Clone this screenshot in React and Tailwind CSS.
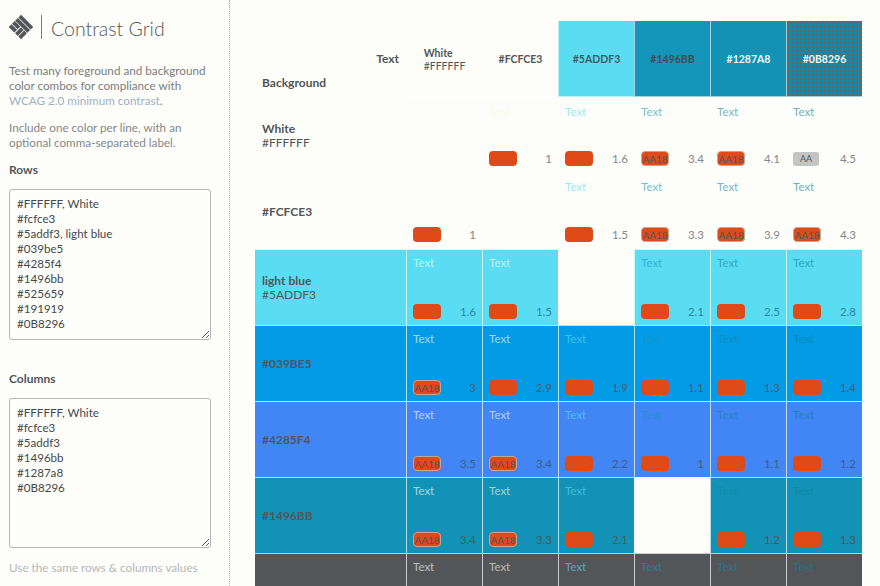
const columns = [
  { hex: "#FFFFFF", label: "White", text: "text-[#ffffff]", bg: "" },
  { hex: "#FCFCE3", text: "text-[#fcfce3]", bg: "" },
  { hex: "#5ADDF3", text: "text-[#5addf3]", bg: "bg-[#5addf3]", head: "text-[#3f5a66]" },
  { hex: "#1496BB", text: "text-[#1496bb]", bg: "bg-[#1496bb]", head: "text-[#3f4c55]" },
  { hex: "#1287A8", text: "text-[#1287a8]", bg: "bg-[#1492b4]", head: "text-[#f2f5f3]" },
  {
    hex: "#0B8296",
    text: "text-[#0b8296]",
    bg: "bg-[#1488a6] bg-[radial-gradient(circle,#7d5c5c_1px,transparent_1px)] bg-[length:4px_4px]",
    head: "text-[#f2f5f3]",
  },
];

// each cell: [ratio, badge] - null where row colour == column colour
const rows = [
  { hex: "#FFFFFF", label: "White", bg: "", num: "text-[#85888a]", pad: "pt-[6px] pb-[7px]",
    cells: [null, ["1", "fail"], ["1.6", "fail"], ["3.4", "AA18"], ["4.1", "AA18"], ["4.5", "AA"]] },
  { hex: "#FCFCE3", bg: "", num: "text-[#85888a]", pad: "pt-[5px] pb-[7px]",
    cells: [["1", "fail"], null, ["1.5", "fail"], ["3.3", "AA18"], ["3.9", "AA18"], ["4.3", "AA18"]] },
  { hex: "#5ADDF3", label: "light blue", bg: "bg-[#5addf3]", num: "text-[#2a86a6]", pad: "pt-[5px] pb-[6px]",
    cells: [["1.6", "fail"], ["1.5", "fail"], null, ["2.1", "fail"], ["2.5", "fail"], ["2.8", "fail"]] },
  { hex: "#039BE5", bg: "bg-[#039be5]", num: "text-[#47606e]", pad: "pt-[5px] pb-[6px]",
    cells: [["3", "AA18"], ["2.9", "fail"], ["1.9", "fail"], ["1.1", "fail"], ["1.3", "fail"], ["1.4", "fail"]] },
  { hex: "#4285F4", bg: "bg-[#4285f4]", num: "text-[#3f5f80]", pad: "pt-[5px] pb-[6px]",
    cells: [["3.5", "AA18"], ["3.4", "AA18"], ["2.2", "fail"], ["1", "fail"], ["1.1", "fail"], ["1.2", "fail"]] },
  { hex: "#1496BB", bg: "bg-[#1292b6]", num: "text-[#4d5a60]", pad: "pt-[5px] pb-[6px]",
    cells: [["3.4", "AA18"], ["3.3", "AA18"], ["2.1", "fail"], null, ["1.2", "fail"], ["1.3", "fail"]] },
];

function Logo() {
  return (
    <svg width="24" height="24" viewBox="0 0 24 24" className="shrink-0">
      <g fill="#525659" transform="rotate(-45 12 12)">
        <rect x="3.4" y="3.4" width="3.8" height="7.8" />
        <rect x="8" y="3.4" width="3.8" height="7.8" />
        <rect x="12.4" y="3.4" width="3.8" height="17.2" />
        <rect x="16.9" y="3.4" width="3.8" height="17.2" />
        <rect x="3.4" y="12.2" width="8.4" height="3.8" />
        <rect x="3.4" y="16.8" width="8.4" height="3.8" />
      </g>
    </svg>
  );
}

function Badge({ kind }) {
  if (kind === "fail") return <span className="block w-[28px] h-[15px] rounded-[4px] bg-[#e04a19]" />;
  if (kind === "AA")
    return (
      <span className="flex items-center justify-center w-[26px] h-[14px] rounded-[3px] bg-[#c3c5c3] text-[9px] leading-none text-[#525659]">
        AA
      </span>
    );
  return (
    <span className="flex items-center justify-center w-[28px] h-[15px] rounded-[4px] bg-[#e04a19] border border-[#c9a493] text-[10px] leading-none text-[#525659]">
      {kind}
    </span>
  );
}

function Cell({ col, cell, num, pad }) {
  if (!cell) return <div className="border-l border-t border-white/70 h-[76px] bg-[#fdfdf9]" />;
  return (
    <div className={`h-[76px] border-l border-t border-white/70 pl-[6px] pr-[6px] flex flex-col justify-between ${pad}`}>
      <span className={`text-[11.5px] leading-[15px] opacity-60 ${col.text}`}>Text</span>
      <div className="flex items-center justify-between">
        <Badge kind={cell[1]} />
        <span className={`text-[11.5px] leading-[15px] ${num}`}>{cell[0]}</span>
      </div>
    </div>
  );
}

function Field({ label, value, heightClass }) {
  return (
    <div>
      <div className="text-xs font-bold leading-[15px] text-[#525659]">{label}</div>
      <textarea
        readOnly
        defaultValue={value}
        className={`block mt-[12px] w-[202px] ${heightClass} bg-[#fdfdf9] border border-[#b2b6b6] rounded-[3px] px-[7px] py-[6px] text-[11.6px] leading-[15px] text-[#45494c] outline-none`}
      />
    </div>
  );
}

export default function App() {
  return (
    <div className="flex h-[586px] overflow-hidden bg-[#fdfdf9] font-['Lato',sans-serif]">
      <aside className="w-[230px] shrink-0 border-r border-dotted border-[#a9acac] pl-[9px]">
        <div className="flex items-center h-[24px] mt-[15px]">
          <Logo />
          <span className="ml-[8px] w-px h-[24px] bg-[#7a7d7f]" />
          <h1 className="ml-[9px] mt-[3px] text-[19.5px] font-light leading-none text-[#525659]">Contrast Grid</h1>
        </div>
        <p className="mt-[24px] w-[205px] text-[11.7px] leading-[15px] text-[#7a7d7f]">
          Test many foreground and background color combos for compliance with{" "}
          <a className="text-[#9db1c0]">WCAG 2.0 minimum contrast</a>.
        </p>
        <p className="mt-[12px] w-[205px] text-[11.7px] leading-[15px] text-[#85888a]">
          Include one color per line, with an optional comma-separated label.
        </p>
        <div className="mt-[12px]">
          <Field
            label="Rows"
            heightClass="h-[151px]"
            value={"#FFFFFF, White\n#fcfce3\n#5addf3, light blue\n#039be5\n#4285f4\n#1496bb\n#525659\n#191919\n#0B8296"}
          />
        </div>
        <div className="mt-[31px]">
          <Field
            label="Columns"
            heightClass="h-[150px]"
            value={"#FFFFFF, White\n#fcfce3\n#5addf3\n#1496bb\n#1287a8\n#0B8296"}
          />
        </div>
        <p className="mt-[12px] text-[11.7px] leading-[15px] text-[#b4b8b8]">Use the same rows &amp; columns values</p>
      </aside>

      <main className="ml-[25px] pt-[21px] w-[607px] shrink-0">
        <div className="grid grid-cols-[151px_repeat(6,76px)]">
          <div className="h-[76px] relative text-xs font-bold text-[#525659]">
            <span className="absolute right-[7px] top-[30px] leading-[15px]">Text</span>
            <span className="absolute left-[7px] top-[54px] leading-[15px]">Background</span>
          </div>
          {columns.map((col) => (
            <div
              key={col.hex}
              className={`h-[76px] pt-[2px] flex items-center justify-center border-l border-b border-white/60 text-[10.5px] font-bold leading-[13px] ${col.bg} ${col.head || "text-[#525659]"}`}
            >
              {col.label ? (
                <div className="flex flex-col items-start">
                  <span>{col.label}</span>
                  <span className="font-normal">{col.hex}</span>
                </div>
              ) : (
                col.hex
              )}
            </div>
          ))}

          {rows.map((row) => (
            <div key={row.hex} className={`col-span-7 grid grid-cols-subgrid ${row.bg}`}>
              <div className="h-[76px] border-t border-white/70 pl-[7px] flex flex-col justify-center text-xs leading-[14px] text-[#525659]">
                <span className="font-bold">{row.label || row.hex}</span>
                {row.label && <span>{row.hex}</span>}
              </div>
              {row.cells.map((cell, i) => (
                <Cell key={columns[i].hex} col={columns[i]} cell={cell} num={row.num} pad={row.pad} />
              ))}
            </div>
          ))}

          {/* last row runs off the bottom of the window, only the text line shows */}
          <div className="col-span-7 grid grid-cols-subgrid bg-[#525659] h-[33px]">
            <div className="border-t border-white/70" />
            {columns.map((col) => (
              <div key={col.hex} className="border-l border-t border-white/70 pl-[6px] pt-[5px]">
                <span className={`block text-[11.5px] leading-[15px] opacity-60 ${col.text}`}>Text</span>
              </div>
            ))}
          </div>
        </div>
      </main>
    </div>
  );
}
